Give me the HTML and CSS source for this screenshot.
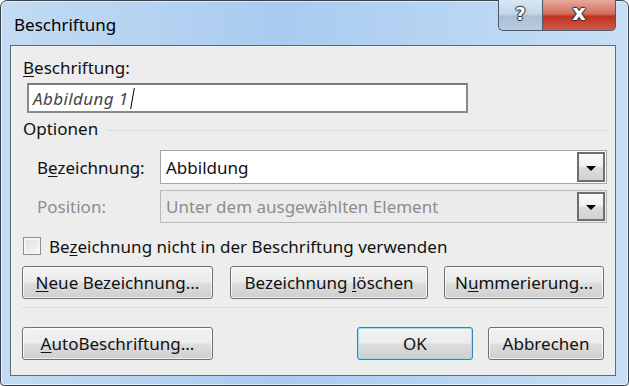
FILE: index.html
```html
<!DOCTYPE html>
<html lang="de">
<head>
    <meta charset="UTF-8">
    <title>Beschriftung</title>
    <link rel="stylesheet" href="styles.css">
</head>
<body>
    <div class="window">
        <div class="titlebar">
            <span class="title">Beschriftung</span>
            <div class="caption-buttons">
                <div class="cap-btn help">?</div>
                <div class="cap-btn close">x</div>
            </div>
        </div>

        <div class="client">
            <div class="caption-label"><u>B</u>eschriftung:</div>
            <div class="caption-input">
                <span class="caption-value">Abbildung 1</span><span class="caret"></span>
            </div>

            <div class="group-head">
                <span>Optionen</span>
                <span class="group-line"></span>
            </div>

            <div class="field-row">
                <label class="field-label">B<u>e</u>zeichnung:</label>
                <div class="combo">
                    <span class="combo-text">Abbildung</span>
                    <span class="combo-arrow"><span class="tri"></span></span>
                </div>
            </div>
            <div class="field-row disabled">
                <label class="field-label">Position:</label>
                <div class="combo">
                    <span class="combo-text">Unter dem ausgewählten Element</span>
                    <span class="combo-arrow"><span class="tri"></span></span>
                </div>
            </div>

            <div class="check-row">
                <span class="checkbox"></span>
                <span>Be<u>z</u>eichnung nicht in der Beschriftung verwenden</span>
            </div>

            <div class="button-row">
                <button class="btn btn-new"><u>N</u>eue Bezeichnung...</button>
                <button class="btn btn-delete">Bezeichnung <u>l</u>öschen</button>
                <button class="btn btn-numbering">N<u>u</u>mmerierung...</button>
            </div>

            <div class="separator"></div>

            <div class="button-row bottom">
                <button class="btn btn-new"><u>A</u>utoBeschriftung...</button>
                <span class="spacer"></span>
                <button class="btn btn-small default">OK</button>
                <button class="btn btn-small">Abbrechen</button>
            </div>
        </div>
    </div>
</body>
</html>
```

FILE: styles.css
```css
html, body {
    margin: 0;
    padding: 0;
    background: #ffffff;
}

body {
    font-family: "Noto Sans", "Open Sans", sans-serif;
    font-size: 17px;
    color: #111;
}

u {
    text-decoration-thickness: 1px;
    text-underline-offset: 2px;
}

.window {
    width: 629px;
    height: 386px;
    box-sizing: border-box;
    border: 1px solid #3a4450;
    border-radius: 7px 7px 4px 4px;
    background: linear-gradient(90deg, #c3dbf3 0%, #a9cbf0 45%, #b9d6f4 75%, #c8def3 100%);
    box-shadow: inset 0 0 0 1px rgba(255, 255, 255, 0.55);
    display: flex;
    flex-direction: column;
}

.titlebar {
    height: 44px;
    display: flex;
    align-items: flex-start;
    justify-content: space-between;
    padding-left: 13px;
}

.title {
    margin-top: 12px;
    font-size: 17px;
    color: #000;
}

.caption-buttons {
    display: flex;
    margin-right: 12px;
    margin-top: -1px;
}

.cap-btn {
    height: 31px;
    box-sizing: border-box;
    border: 1px solid #4f5a68;
    border-top: none;
    color: #fff;
    font-weight: bold;
    font-family: "DejaVu Sans", sans-serif;
    text-align: center;
    line-height: 27px;
    text-shadow: 0 0 1px #333, 1px 0 1px #333, -1px 0 1px #333, 0 1px 1px #333, 0 -1px 1px #333;
}

.help {
    width: 44px;
    font-size: 18px;
    border-radius: 0 0 0 5px;
    border-right: none;
    background: linear-gradient(180deg, #d8e6f3 0%, #c6d7ea 45%, #aabfd6 55%, #b9cde1 100%);
}

.close {
    width: 74px;
    font-size: 21px;
    line-height: 26px;
    border-radius: 0 0 5px 0;
    background: linear-gradient(180deg, #e6a99e 0%, #d4705f 45%, #bf3423 55%, #d05a45 100%);
}

.client {
    margin: 0 12px 9px 9px;
    flex: 1;
    border: 1px solid #5b6b7c;
    background: #ededed;
    padding: 12px 8px 0 11px;
    display: flex;
    flex-direction: column;
}

.caption-label {
    height: 20px;
    line-height: 20px;
    margin-left: 1px;
}

.caption-input {
    margin-top: 5px;
    margin-left: 5px;
    width: 441px;
    height: 30px;
    box-sizing: border-box;
    border: 2px solid #8a8a8a;
    border-top-color: #7a7a7a;
    background: #fff;
    display: flex;
    align-items: center;
    padding-left: 4px;
}

.caption-value {
    font-style: italic;
    color: #474747;
    letter-spacing: 0.4px;
}

.caret {
    width: 1px;
    height: 21px;
    background: #000;
    margin-left: 3px;
    transform: skewX(-10deg);
}

.group-head {
    margin-top: 6px;
    height: 20px;
    line-height: 20px;
    display: flex;
    align-items: center;
    margin-left: 1px;
}

.group-line {
    flex: 1;
    height: 1px;
    background: #d3dde5;
    margin-left: 9px;
    margin-top: 2px;
}

.field-row {
    display: flex;
    align-items: center;
    margin-top: 11px;
}

.field-row.disabled {
    margin-top: 6px;
    color: #8d8d8d;
}

.field-label {
    width: 123px;
    margin-left: 15px;
    box-sizing: border-box;
}

.combo {
    flex: 1;
    height: 34px;
    box-sizing: border-box;
    border: 1px solid #a5a5a5;
    background: #fff;
    display: flex;
    align-items: center;
    justify-content: space-between;
    padding: 0 1px 0 5px;
}

.disabled .combo {
    height: 33px;
    background: #ebebeb;
    border-color: #b8b8b8;
}

.combo-arrow {
    width: 28px;
    height: 30px;
    box-sizing: border-box;
    border: 2px solid #6e6e6e;
    background: linear-gradient(180deg, #fbfbfb 0%, #f0f0f0 45%, #dcdcdc 55%, #d2d2d2 100%);
    display: flex;
    align-items: center;
    justify-content: center;
}

.disabled .combo-arrow {
    height: 29px;
}

.tri {
    width: 0;
    height: 0;
    border-left: 5px solid transparent;
    border-right: 5px solid transparent;
    border-top: 5px solid #000;
    margin-top: 2px;
}

.check-row {
    margin-top: 13px;
    height: 20px;
    display: flex;
    align-items: center;
    margin-left: 1px;
}

.checkbox {
    width: 18px;
    height: 18px;
    box-sizing: border-box;
    border: 1px solid #8e8f8f;
    background: linear-gradient(135deg, #dcdcdc 0%, #f4f4f4 80%, #fbfbfb 100%);
    box-shadow: inset 0 0 0 2px #f4f4f4;
    margin-right: 8px;
}

.button-row {
    margin-top: 10px;
    display: flex;
    gap: 16px;
}

.button-row.bottom {
    margin-top: 19px;
    margin-right: 3px;
    gap: 15px;
}

.spacer {
    flex: 1;
}

.btn {
    height: 33px;
    box-sizing: border-box;
    border: 1px solid #707070;
    border-radius: 3px;
    background: linear-gradient(180deg, #f3f3f3 0%, #ebebeb 48%, #dddddd 52%, #cfcfcf 100%);
    box-shadow: inset 0 0 0 1px rgba(255, 255, 255, 0.7);
    font-family: inherit;
    font-size: 17px;
    color: #111;
    padding: 0;
}

.btn-new {
    width: 191px;
}

.btn-delete {
    width: 198px;
    margin-left: 1px;
}

.btn-numbering {
    width: 160px;
}

.btn-small {
    width: 116px;
}

.btn.default {
    border-color: #3c7fb1;
    box-shadow: inset 0 0 0 1px #9fdcf7;
}

.separator {
    margin-top: 8px;
    height: 1px;
    background: #d3dde5;
}
```
